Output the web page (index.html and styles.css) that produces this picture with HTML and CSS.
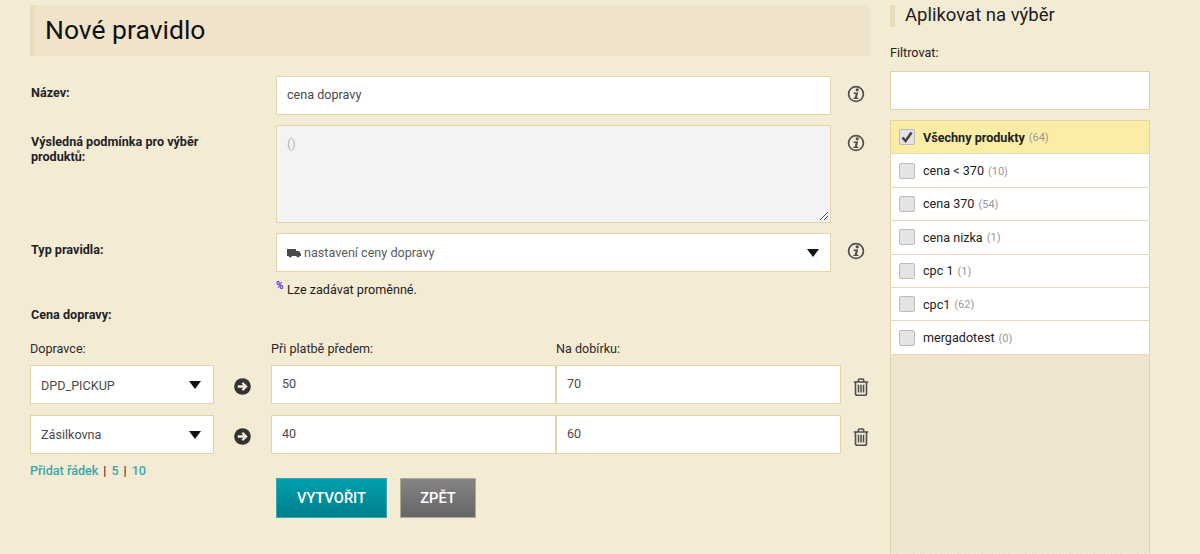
FILE: index.html
```html
<!DOCTYPE html>
<html lang="cs">
<head>
<meta charset="utf-8">
<title>Nové pravidlo</title>
<link rel="stylesheet" href="styles.css">
</head>
<body>
<svg class="defs" width="0" height="0">
  <symbol id="info" viewBox="0 0 18 18">
    <circle cx="9" cy="9" r="7.4" fill="none" stroke="currentColor" stroke-width="1.7"/>
    <circle cx="10.2" cy="4.8" r="1.6" fill="currentColor"/>
    <path d="M6.6 7.5h4.6l-1.3 5.2h1.5v1.4H6.4v-1.4h1.3l.9-3.8h-2z" fill="currentColor"/>
  </symbol>
  <symbol id="arrow" viewBox="0 0 18 18">
    <circle cx="9" cy="9" r="8.8" fill="currentColor"/>
    <path d="M4 9h8.5M8.8 5 12.8 9 8.8 13" fill="none" stroke="#f4ebd4" stroke-width="2.4"/>
  </symbol>
  <symbol id="trash" viewBox="0 0 16 18">
    <path d="M.8 4h14.4M5.3 4V2.2q0-1.2 1.2-1.2h3q1.2 0 1.2 1.2V4" fill="none" stroke="currentColor" stroke-width="1.6"/>
    <path d="M2.5 4v11.4q0 1.8 1.8 1.8h7.4q1.8 0 1.8-1.8V4" fill="none" stroke="currentColor" stroke-width="1.6"/>
    <path d="M5.5 6.7v7.8M8 6.7v7.8M10.5 6.7v7.8" fill="none" stroke="currentColor" stroke-width="1.5"/>
  </symbol>
</svg>
<div class="page">
  <main class="main">
    <h1 class="title">Nové pravidlo</h1>

    <div class="row">
      <label class="label">Název:</label>
      <div class="field">cena dopravy</div>
      <svg class="info"><use href="#info"/></svg>
    </div>

    <div class="row">
      <label class="label">Výsledná podmínka pro výběr produktů:</label>
      <div class="field area">()
        <svg class="grip" width="10" height="10" viewBox="0 0 10 10"><path d="M1 9 9 1M5 9 9 5" stroke="#555" stroke-width="1" fill="none"/></svg>
      </div>
      <svg class="info"><use href="#info"/></svg>
    </div>

    <div class="row">
      <label class="label">Typ pravidla:</label>
      <div class="field select">
        <span class="type-value">
          <svg class="truck" width="14" height="10" viewBox="0 0 14 10"><path d="M0 1h9v2h3l2 3v2h-1.2a1.8 1.8 0 0 1-3.5 0H5a1.8 1.8 0 0 1-3.5 0H0z" fill="#4a4a4a"/></svg>
          nastavení ceny dopravy
        </span>
        <span class="caret"></span>
      </div>
      <svg class="info"><use href="#info"/></svg>
    </div>

    <p class="note"><sup class="pct">%</sup> Lze zadávat proměnné.</p>

    <div class="section">Cena dopravy:</div>

    <div class="ship-grid">
      <div class="ship-head">Dopravce:</div>
      <div></div>
      <div class="ship-head">Při platbě předem:</div>
      <div class="ship-head">Na dobírku:</div>
      <div></div>

      <div class="field select">DPD_PICKUP<span class="caret"></span></div>
      <svg class="arrow"><use href="#arrow"/></svg>
      <div class="field">50</div>
      <div class="field">70</div>
      <svg class="trash"><use href="#trash"/></svg>

      <div class="field select">Zásilkovna<span class="caret"></span></div>
      <svg class="arrow"><use href="#arrow"/></svg>
      <div class="field">40</div>
      <div class="field">60</div>
      <svg class="trash"><use href="#trash"/></svg>
    </div>

    <div class="add-links">
      <a class="link">Přidat řádek</a><span class="sep">|</span><a class="link">5</a><span class="sep">|</span><a class="link">10</a>
    </div>

    <div class="actions">
      <button class="btn primary">VYTVOŘIT</button>
      <button class="btn secondary">ZPĚT</button>
    </div>
  </main>

  <aside class="side">
    <h2 class="side-title">Aplikovat na výběr</h2>
    <div class="filter-label">Filtrovat:</div>
    <div class="field filter"></div>
    <div class="list">
      <div class="item active"><span class="check"><svg width="14" height="14" viewBox="0 0 14 14"><path d="M2.5 7.5 5.6 11 11.5 2.5" fill="none" stroke="#444" stroke-width="2.6"/></svg></span><b>Všechny produkty</b><span class="count">(64)</span></div>
      <div class="item"><span class="check"></span>cena &lt; 370<span class="count">(10)</span></div>
      <div class="item"><span class="check"></span>cena 370<span class="count">(54)</span></div>
      <div class="item"><span class="check"></span>cena nizka<span class="count">(1)</span></div>
      <div class="item"><span class="check"></span>cpc 1<span class="count">(1)</span></div>
      <div class="item"><span class="check"></span>cpc1<span class="count">(62)</span></div>
      <div class="item"><span class="check"></span>mergadotest<span class="count">(0)</span></div>
    </div>
  </aside>
</div>
</body>
</html>
```
FILE: styles.css
```css
* { box-sizing: border-box; }
html, body { margin: 0; height: 100%; overflow: hidden; }
body {
  background: #f4ebd4;
  font-family: Roboto, "Liberation Sans", sans-serif;
  font-size: 12.6px;
  color: #1c1c1c;
}
.defs { display: block; height: 0; }
.page {
  display: flex;
  gap: 20px;
  height: 554px;
  padding: 5px 0 0 30px;
}
.main { width: 840px; flex: none; }
.title {
  margin: 0 0 20px;
  height: 51px;
  line-height: 50px;
  padding-left: 10px;
  background: #efe4c9;
  border-left: 5px solid #e8dcba;
  font-size: 26.5px;
  font-weight: 400;
  color: #111;
}
.row { display: flex; align-items: flex-start; margin-bottom: 10px; }
.label {
  width: 246px;
  flex: none;
  padding: 9px 60px 0 1px;
  font-weight: 700;
  line-height: 15px;
  color: #1f2328;
}
.field {
  background: #fff;
  border: 1px solid #e3d4ab;
  color: #4a4a4a;
  height: 39px;
  line-height: 36px;
  padding: 0 10px;
  position: relative;
}
.row .field { width: 555px; flex: none; }
.row .area {
  height: 98px;
  background: #f3f3f3;
  color: #b4b8bc;
}
.grip { position: absolute; right: 1px; bottom: 1px; }
.select {
  display: flex;
  align-items: center;
  justify-content: space-between;
  line-height: normal;
}
.type-value { display: flex; align-items: center; gap: 3px; color: #5c5c5c; }
.truck { flex: none; margin-top: 1px; }
.caret {
  width: 0;
  height: 0;
  border-left: 6.5px solid transparent;
  border-right: 6.5px solid transparent;
  border-top: 8px solid #111;
  margin-right: 1px;
}
.info { width: 18px; height: 18px; margin: 9px 0 0 16px; flex: none; color: #4f4f4f; }
.note { margin: 0 0 0 246px; height: 15px; line-height: 15px; color: #222; }
.pct { color: #4a2ee8; font-size: 10px; font-weight: 700; line-height: 0; vertical-align: 5px; margin-right: 0.5px; }
.section {
  height: 32px;
  padding: 10px 0 0 1px;
  font-weight: 700;
  line-height: 15px;
  color: #1f2328;
}
.ship-grid {
  display: grid;
  grid-template-columns: 184px 57px 285px 285px 29px;
  grid-template-rows: 26px 49.5px 40px;
  align-items: start;
  margin-top: 10px;
}
.ship-head { line-height: 19px; color: #2a2a2a; }
.ship-grid .select { padding: 1px 11px 0 10px; }
.arrow { width: 17px; height: 17px; margin-top: 13px; justify-self: center; color: #333; }
.trash { width: 16px; height: 18px; margin: 13px 0 0 12px; color: #4f4f4f; }
.add-links { margin-top: 8.5px; height: 15px; line-height: 16px; }
.link { color: #37a8ad; font-weight: 500; }
.sep { margin: 0 5px; color: #222; }
.actions { display: flex; gap: 13px; margin-left: 246px; }
.btn {
  height: 40px;
  border-radius: 0;
  font-family: inherit;
  font-size: 14.6px;
  font-weight: 500;
  color: #fff;
  padding: 0;
}
.primary {
  width: 111px;
  background: linear-gradient(#00a0ae, #007f8c);
  border: 1px solid #3aa9ae;
}
.secondary {
  width: 76px;
  background: linear-gradient(#848484, #666);
  border: 1px solid #b0a998;
}
.side { width: 260px; flex: none; display: flex; flex-direction: column; }
.side-title {
  margin: 0 0 18px;
  height: 22px;
  line-height: 21px;
  padding-left: 10px;
  border-left: 5px solid #e8dcba;
  font-size: 18.5px;
  font-weight: 400;
  color: #1c1c1c;
}
.filter-label { height: 26px; line-height: 16px; color: #222; }
.filter { width: 260px; flex: none; margin-bottom: 10px; }
.list {
  flex: 1;
  border: 1px solid #e3d4ab;
  border-bottom: none;
  background: repeating-linear-gradient(135deg, #ede2c9 0 1px, #f1e8d3 1px 2.4px);
}
.item {
  height: 33.4px;
  display: flex;
  align-items: center;
  background: #fff;
  border-bottom: 1px solid #e6d9b8;
  color: #222;
  padding-left: 8px;
}
.item.active { background: #fbeda5; }
.item b { font-weight: 700; }
.count { color: #999; font-size: 11px; margin-left: 4px; margin-top: 1px; }
.check {
  width: 16px;
  height: 16px;
  margin-right: 8px;
  border: 1px solid #bbb;
  border-radius: 2px;
  background: #e4e4e4;
  display: flex;
  align-items: center;
  justify-content: center;
  flex: none;
}
```
